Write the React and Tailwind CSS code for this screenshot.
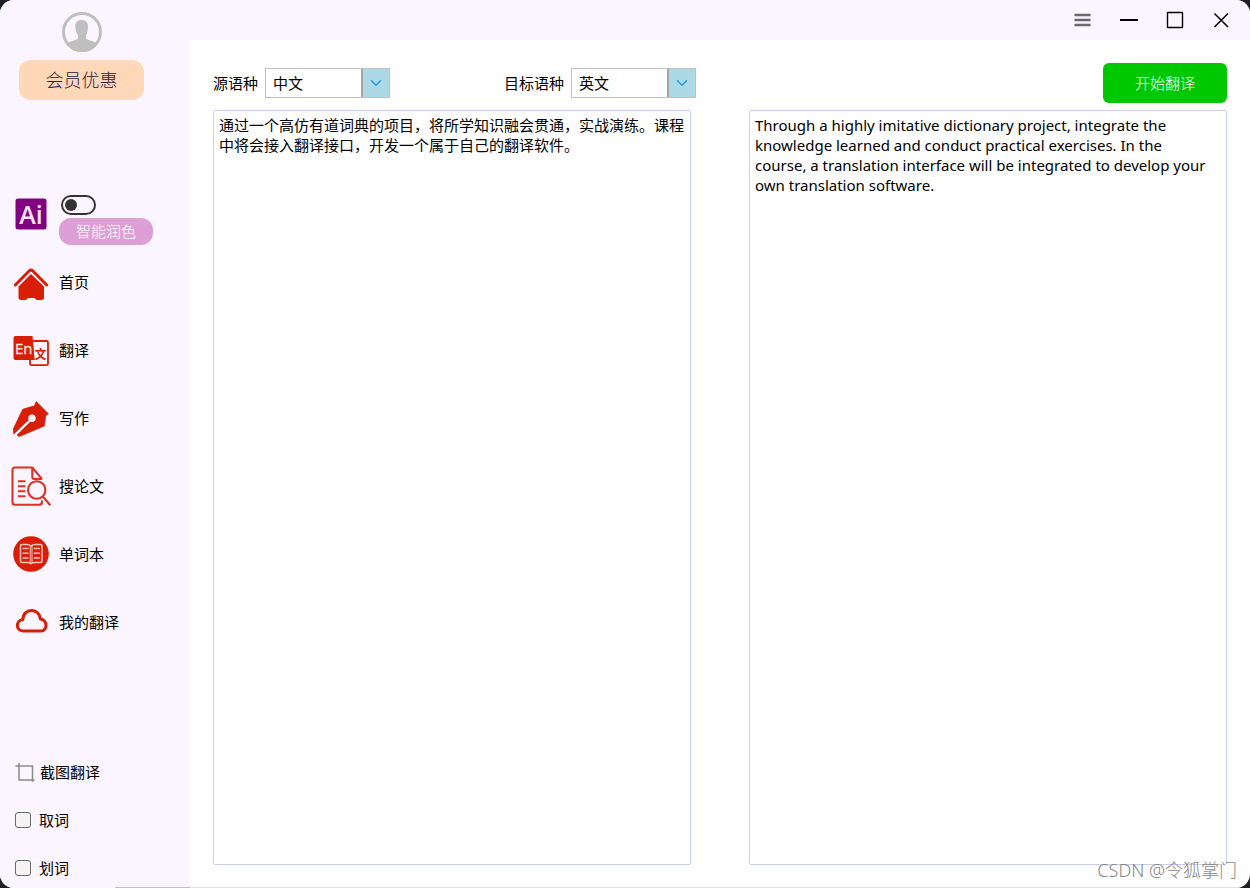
import React, { useState } from 'react';
import { ChevronDown } from 'lucide-react';

const RED = '#d81e06';

/* ---------- Icons ---------- */

const AvatarIcon = () => (
  <svg className="size-10" viewBox="0 0 40 40" aria-hidden="true">
    <circle cx="20" cy="20" r="18.5" fill="none" stroke="#bfbfbf" strokeWidth="3" />
    <path
      fill="#bfbfbf"
      d="M19.500 8C23.800 8 26 10.300 26 14.500C26 18 25.300 21.500 24 23.500V26C24.500 27.800 28 28.300 31 29.500C33 30.300 34.500 31 35.500 32A19 19 0 0 1 4.500 32C5.500 31 7 30.300 9 29.500C12 28.300 15.500 27.800 16 26V23.500C14.500 21.500 13.300 18 13.300 14.500C13.300 10.300 15.500 8 19.500 8Z"
    />
  </svg>
);

const HomeIcon = () => (
  <svg className="size-10" viewBox="0 0 40 40" aria-hidden="true">
    <path d="M4.300 23 18.300 8.800Q20 7.200 21.700 8.800L35.700 23" fill="none" stroke={RED} strokeWidth="3" strokeLinecap="round" />
    <path d="M20 12 28 19.800 33 24.500V35.500Q33 38 30.500 38H26.500Q25 38 24.500 37Q24 36 23 36H17.500Q16.500 36 16 37Q15.500 38 14 38H10Q7.500 38 7.500 35.500V24.500Z" fill={RED} />
  </svg>
);

const TranslateIcon = () => (
  <svg className="size-10" viewBox="0 0 40 40" aria-hidden="true">
    <path d="M4.500 6H21.500L23.500 30H4.500Q2.500 30 2.500 28V8Q2.500 6 4.500 6Z" fill={RED} />
    <rect x="19" y="11" width="18" height="24.200" rx="1.500" fill="none" stroke={RED} strokeWidth="1.800" />
    <path d="M18.500 10.500H21.800L23.500 30H18.500Z" fill={RED} />
    <text x="4" y="23.500" fontSize="15" fontFamily="Open Sans, sans-serif" fill="#fbe3e3" stroke="#fbe3e3" strokeWidth="0.300">En</text>
    <text x="23.500" y="29" fontSize="12" fontWeight="700" fontFamily="Noto Sans CJK SC, sans-serif" fill={RED}>文</text>
  </svg>
);

const PenIcon = () => (
  <svg className="size-10" viewBox="0 0 40 40" aria-hidden="true">
    <path
      d="M25.200 3.500 37.300 15.800 34.700 17.700 33.200 28 8.300 38.500 6 37 18.500 24.500 16.800 22.800 2.800 36 2.300 31 11.700 11.300 23.600 7.700Z"
      fill={RED}
      stroke={RED}
      strokeWidth="0.800"
      strokeLinejoin="round"
    />
    <circle cx="21" cy="20.300" r="3.700" fill="#faf5ff" />
    <path d="M19.500 22 4.200 36.800" stroke="#faf5ff" strokeWidth="2" />
  </svg>
);

const PaperSearchIcon = () => (
  <svg className="size-10" viewBox="0 0 40 40" aria-hidden="true" fill="none" stroke="#dc3023" strokeWidth="2.100">
    <path d="M31 13.200 21.300 1.500H4Q1.500 1.500 1.500 4V36Q1.500 38.800 4 38.800H28Q31 38.800 31 36V34.500" />
    <path d="M21.300 1.500V11Q21.300 13 23.300 13H31" />
    <path d="M7 15.200H14.500M7 20.200H14.500M7 25.200H14.500M7 30.200H14.500" />
    <circle cx="25.700" cy="24" r="8.700" />
    <path d="M32 30.800 39.300 39.300" />
  </svg>
);

const WordBookIcon = () => (
  <svg className="size-10" viewBox="0 0 40 40" aria-hidden="true">
    <circle cx="20" cy="20" r="17.800" fill={RED} />
    <g fill="none" stroke="#f7c5c0" strokeWidth="1.500">
      <path d="M20 12Q18.500 10.500 16 10.500H11Q9.500 10.500 9.500 12V27Q9.500 28.500 11 28.500H16Q19 28.500 19.500 29.500H20.500Q21 28.500 24 28.500H29.500Q31 28.500 31 27V12Q31 10.500 29.500 10.500H24Q21.500 10.500 20 12Z" />
      <path d="M19.300 12V28.500M21 12V28.500" strokeWidth="1" />
      <path d="M11.500 14.500H17.500M11.500 19.200H17.500M11.500 24H17.500M22.800 14.500H28.800M22.800 19.200H28.800M22.800 24H28.800" />
    </g>
  </svg>
);

const CloudIcon = () => (
  <svg className="size-10" viewBox="0 0 40 40" aria-hidden="true">
    <path
      d="M12 29C4.500 29 4.500 18.500 11.800 17.600C12 5.700 28.500 5.700 29.300 17C37 17.800 36.500 29 30 29Z"
      fill="none"
      stroke={RED}
      strokeWidth="3"
      strokeLinejoin="round"
    />
  </svg>
);

const CropIcon = () => (
  <svg className="size-5" viewBox="0 0 20 20" aria-hidden="true" fill="none" stroke="#8a8a8a" strokeWidth="1.500">
    <path d="M0.500 4H17.500V20M4 1V18H19.500" />
  </svg>
);

const navItems = [
  { label: '首页', Icon: HomeIcon },
  { label: '翻译', Icon: TranslateIcon },
  { label: '写作', Icon: PenIcon },
  { label: '搜论文', Icon: PaperSearchIcon },
  { label: '单词本', Icon: WordBookIcon },
  { label: '我的翻译', Icon: CloudIcon },
];

const SOURCE_TEXT =
  '通过一个高仿有道词典的项目，将所学知识融会贯通，实战演练。课程中将会接入翻译接口，开发一个属于自己的翻译软件。';
const TARGET_TEXT =
  'Through a highly imitative dictionary project, integrate the knowledge learned and conduct practical exercises. In the course, a translation interface will be integrated to develop your own translation software.';

/* ---------- Sidebar ---------- */

const Sidebar = () => {
  const [polish, setPolish] = useState(false);

  return (
    <aside className="flex w-[190px] shrink-0 flex-col bg-[#faf5ff]">
      <div className="flex w-[163px] flex-col items-center gap-2 self-start pt-3">
        <button type="button" aria-label="用户头像">
          <AvatarIcon />
        </button>
        <button type="button" className="h-10 w-[125px] rounded-xl bg-[#ffd7b9] text-lg font-light text-[#2b1a3d]">
          会员优惠
        </button>
      </div>

      <div className="mt-[95px] flex gap-3 pl-[15px]">
        <svg className="mt-[3px] size-8" viewBox="0 0 32 32" aria-hidden="true">
          <rect x="0.500" y="0.500" width="31" height="31" rx="2.500" fill="#800080" />
          <text x="16" y="25.500" textAnchor="middle" fontSize="25" fontWeight="600" fontFamily="Open Sans, sans-serif" fill="#f3e3f5">Ai</text>
        </svg>
        <div className="flex flex-col items-start gap-[3px]">
          <input
            type="checkbox"
            id="polish"
            checked={polish}
            onChange={(e) => setPolish(e.target.checked)}
            className="ml-[2px] flex h-5 w-[35px] appearance-none items-center rounded-full border-2 border-[#333] px-[2px] before:size-3 before:rounded-full before:bg-[#333] checked:justify-end"
          />
          <label htmlFor="polish" className="flex h-[27px] w-[94px] items-center justify-center rounded-xl bg-[#dda0d6] text-[15px] font-light text-white">
            智能润色
          </label>
        </div>
      </div>

      <nav className="mt-[3px] flex flex-col">
        {navItems.map(({ label, Icon }) => (
          <button key={label} type="button" className="flex h-17 items-center gap-2 pl-[11px] text-left">
            <Icon />
            <span>{label}</span>
          </button>
        ))}
      </nav>

      <div className="mt-auto flex flex-col gap-2 pl-[15px]">
        <button type="button" className="flex h-10 items-center gap-[5px] text-left">
          <CropIcon />
          <span>截图翻译</span>
        </button>
        {['取词', '划词'].map((label) => (
          <label key={label} className="flex h-10 items-center gap-2">
            <input
              type="checkbox"
              className="size-4 appearance-none rounded-[3px] border border-[#6b6b6b] bg-[#f3f3f3] checked:bg-[#0067c0]"
            />
            <span>{label}</span>
          </label>
        ))}
      </div>
    </aside>
  );
};

/* ---------- Title bar ---------- */

const TitleBar = () => {
  const button = 'flex h-10 w-[46px] items-center justify-center';

  return (
    <header className="flex justify-end bg-[#faf5ff] pr-[6px]">
      <button type="button" aria-label="菜单" className={button}>
        <svg className="size-5" viewBox="0 0 20 20" stroke="#6a6a6a" strokeWidth="2.400">
          <path d="M1.500 5H17.500M1.500 10H17.500M1.500 15H17.500" />
        </svg>
      </button>
      <button type="button" aria-label="最小化" className={button}>
        <svg className="size-5" viewBox="0 0 20 20" stroke="#000" strokeWidth="2">
          <path d="M1 10H19" />
        </svg>
      </button>
      <button type="button" aria-label="最大化" className={button}>
        <svg className="size-5" viewBox="0 0 20 20" fill="none" stroke="#000" strokeWidth="1.400">
          <rect x="2.500" y="2.500" width="15" height="15" rx="0.500" />
        </svg>
      </button>
      <button type="button" aria-label="关闭" className={button}>
        <svg className="size-5" viewBox="0 0 20 20" stroke="#000" strokeWidth="1.500">
          <path d="M3.500 3.500 17 17M17 3.500 3.500 17" />
        </svg>
      </button>
    </header>
  );
};

/* ---------- Language select ---------- */

const LanguageSelect = ({ id, label, value, onChange }) => (
  <div className="flex items-center gap-[7px]">
    <label htmlFor={id}>{label}</label>
    <div className="relative">
      <select
        id={id}
        value={value}
        onChange={(e) => onChange(e.target.value)}
        className="block h-[30px] w-[125px] appearance-none border border-[#c0c0c0] bg-white pl-[7px]"
      >
        <option>中文</option>
        <option>英文</option>
      </select>
      <span className="pointer-events-none absolute inset-y-px right-px flex w-7 items-center justify-center border-l-2 border-[#a5a5a5] bg-[#add8e6]">
        <ChevronDown className="size-[18px] text-[#1e9be0]" strokeWidth={1.8} />
      </span>
    </div>
  </div>
);

export default function App() {
  const [from, setFrom] = useState('中文');
  const [to, setTo] = useState('英文');
  const [source, setSource] = useState(SOURCE_TEXT);
  const textBox = 'resize-none rounded-[2px] border border-[#c8cdec] bg-white pt-1 pb-1 pl-[5px] leading-5 outline-none';

  return (
    <div className="min-h-screen bg-[#202024]">
      <div className="relative flex min-h-screen overflow-hidden rounded-[14px] bg-white font-['Noto_Sans','Noto_Sans_CJK_SC',sans-serif] text-[15px] text-black">
        <Sidebar />

        <div className="flex min-w-0 flex-1 flex-col">
          <TitleBar />
          <main className="flex flex-1 flex-col gap-[7px] p-[23px]">
            <div className="flex items-center">
              <div className="flex gap-[114px]">
                <LanguageSelect id="from" label="源语种" value={from} onChange={setFrom} />
                <LanguageSelect id="to" label="目标语种" value={to} onChange={setTo} />
              </div>
              <button type="button" className="ml-auto h-10 w-[124px] rounded-md bg-[#00c800] font-light text-white">
                开始翻译
              </button>
            </div>
            <div className="grid flex-1 grid-cols-2 gap-[58px]">
              <textarea
                aria-label="原文"
                spellCheck={false}
                value={source}
                onChange={(e) => setSource(e.target.value)}
                className={`${textBox} pr-[5px]`}
              />
              <textarea aria-label="译文" spellCheck={false} readOnly value={TARGET_TEXT} className={`${textBox} pr-3`} />
            </div>
          </main>
        </div>

        <div className="absolute right-0 bottom-0 left-[115px] flex h-px">
          <span className="w-[75px] bg-[#c0bdc6]" />
          <span className="flex-1 bg-[#e0e0e0]" />
        </div>
        <span className="absolute right-[13px] bottom-[6px] text-lg leading-6 font-light text-[#858585]">CSDN @令狐掌门</span>
      </div>
    </div>
  );
}
